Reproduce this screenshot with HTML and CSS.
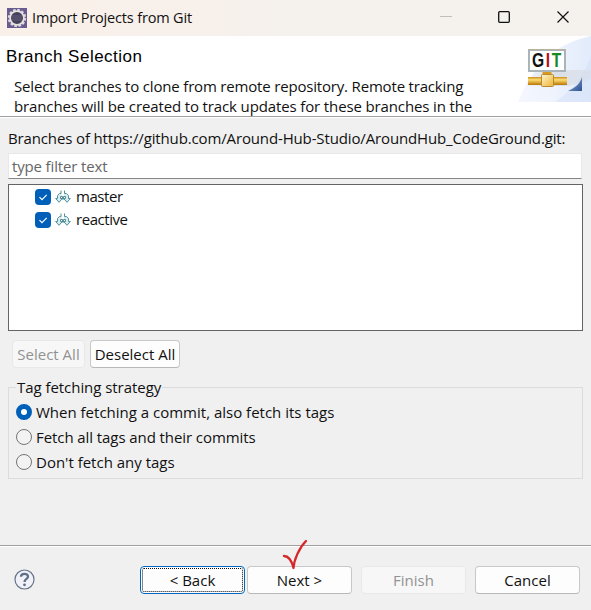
FILE: index.html
```html
<!DOCTYPE html>
<html lang="en">
<head>
<meta charset="utf-8">
<title>Import Projects from Git</title>
<link rel="stylesheet" href="styles.css">
</head>
<body>
<div class="dialog">
  <header class="titlebar">
    <svg class="app-icon" width="20" height="20" viewBox="0 0 20 20">
      <rect width="20" height="20" fill="#675b91"/>
      <circle cx="10" cy="10" r="8.200" fill="none" stroke="#dedbd9" stroke-width="2" stroke-dasharray="2.6 1.7"/>
      <circle cx="10" cy="10" r="6.900" fill="#45405b" stroke="#e6e2df" stroke-width="1.800"/>
      <path d="M5 8h10M4.500 10h11M5 12h10" stroke="#655e7c"/>
    </svg>
    <span class="title">Import Projects from Git</span>
    <svg class="window-controls" width="151" height="36" viewBox="0 0 151 36" fill="none">
      <path d="M0 16.500h12" stroke="#c2beba"/>
      <rect x="58.700" y="11.700" width="10.600" height="10.600" rx="1" stroke="#111" stroke-width="1.300"/>
      <path d="M117.500 11.500l11 11M128.500 11.500l-11 11" stroke="#111" stroke-width="1.200"/>
    </svg>
  </header>

  <section class="banner">
    <div class="banner-text">
      <h1>Branch Selection</h1>
      <p><span class="desc-a">Select branches to clone from remote repository. Remote tracking</span><br><span class="desc-b">branches will be created to track updates for these branches in the</span></p>
    </div>
    <svg class="banner-art" width="76" height="66" viewBox="0 0 76 66">
      <defs>
        <linearGradient id="sky" x1="0" y1="0" x2="1" y2="0">
          <stop offset="0" stop-color="#f4f7fe"/><stop offset=".5" stop-color="#eef3fd"/><stop offset="1" stop-color="#e2ebfb"/>
        </linearGradient>
        <linearGradient id="pipe" x1="0" y1="0" x2="0" y2="1">
          <stop offset="0" stop-color="#c98e1c"/><stop offset=".35" stop-color="#ffdc73"/><stop offset="1" stop-color="#b97705"/>
        </linearGradient>
        <linearGradient id="joint" x1="0" y1="0" x2="1" y2="1">
          <stop offset="0" stop-color="#fff5ca"/><stop offset="1" stop-color="#efb334"/>
        </linearGradient>
        <linearGradient id="shade" x1="0" y1="0" x2="1" y2="0">
          <stop offset="0" stop-color="#d5d9e0" stop-opacity="0"/><stop offset=".5" stop-color="#d5d9e0" stop-opacity=".8"/><stop offset="1" stop-color="#d5d9e0" stop-opacity=".4"/>
        </linearGradient>
        <linearGradient id="corner" x1="0" y1="0" x2="1" y2="1">
          <stop offset="0" stop-color="#8faedb"/><stop offset="1" stop-color="#2e538f"/>
        </linearGradient>
      </defs>
      <path d="M3 66C18 30 38 8 76 0V66Z" fill="url(#sky)"/>
      <path d="M40 66C55 56 68 42 76 20V66Z" fill="#d3e0f7" opacity=".5"/>
      <path d="M8 50L22 34H76V43L54 50H8Z" fill="url(#shade)"/>
      <rect x="14" y="14" width="36" height="21" fill="#fff" stroke="#a9b5b8" stroke-width="2"/>
      <path d="M13 13.500H51" stroke="#b9b39b"/>
      <text class="git-letters" transform="translate(17 31) scale(.8 1)"><tspan fill="#111">G</tspan><tspan fill="#b5121b">I</tspan><tspan fill="#168a20">T</tspan></text>
      <rect x="27.500" y="36" width="9" height="4" fill="#d99b1f"/>
      <rect x="13" y="41" width="39" height="8" fill="url(#pipe)"/>
      <rect x="26.500" y="38.500" width="12" height="12" rx="1" fill="url(#joint)" stroke="#b98932"/>
      <path d="M67 41V55H53C60 52 65 48 67 41Z" fill="url(#corner)"/>
    </svg>
  </section>

  <main class="content">
    <div class="branch-label">Branches of https://github.com/Around-Hub-Studio/AroundHub_CodeGround.git:</div>
    <div class="filter">type filter text</div>
    <div class="tree">
      <div class="tree-row">
        <span class="checkbox"><svg width="16" height="16" viewBox="0 0 16 16"><path d="M4.500 8.200l2.500 2.500 4.700-4.900" fill="none" stroke="#fff" stroke-width="1.200"/></svg></span>
        <svg class="branch-icon" width="16" height="14" viewBox="0 0 16 14"><path id="branch-shape" d="M6 .5V3.500H4.500L2.500 5.500V8.500H.7L4 12.300L7.300 8.500H5.500V6.500H7.500V9.500M8.500 9.500V6.500H10.500V8.500H8.700L12 12.300L15.300 8.500H13.500V5.500L11.500 3.500H9.500V.5" fill="#d5eeee" stroke="#548e9b"/></svg>
        <span class="branch-name">master</span>
      </div>
      <div class="tree-row">
        <span class="checkbox"><svg width="16" height="16" viewBox="0 0 16 16"><path d="M4.500 8.200l2.500 2.500 4.700-4.900" fill="none" stroke="#fff" stroke-width="1.200"/></svg></span>
        <svg class="branch-icon" width="16" height="14" viewBox="0 0 16 14"><use href="#branch-shape"/></svg>
        <span class="branch-name">reactive</span>
      </div>
    </div>
    <div class="selection-actions">
      <button class="button select-all" disabled>Select All</button>
      <button class="button deselect-all">Deselect All</button>
    </div>
    <fieldset class="tags">
      <legend>Tag fetching strategy</legend>
      <div class="option"><span class="radio selected"></span><span>When fetching a commit, also fetch its tags</span></div>
      <div class="option"><span class="radio"></span><span class="opt-b">Fetch all tags and their commits</span></div>
      <div class="option"><span class="radio"></span><span>Don't fetch any tags</span></div>
    </fieldset>
  </main>

  <footer class="footer">
    <svg class="help" width="21" height="21" viewBox="0 0 21 21"><circle cx="10.500" cy="10.500" r="9.500" fill="#f0f2f7" stroke="#67748a" stroke-width="1.200"/><path d="M7 7.800C7 3.800 14 4 14 7.500C14 10 10.500 9.700 10.500 13" fill="none" stroke="#607089" stroke-width="2.300"/><circle cx="10.500" cy="15.800" r="1.400" fill="#607089"/></svg>
    <button class="button back">&lt; Back</button>
    <button class="button next">Next &gt;</button>
    <button class="button finish" disabled>Finish</button>
    <button class="button cancel">Cancel</button>
    <svg class="tick" width="28" height="34" viewBox="0 0 28 34"><path d="M3 18C8 18 11 24 12.500 30C13 22 18 10 25 3" fill="none" stroke="#d6282b" stroke-width="2.300" stroke-linecap="round" stroke-linejoin="round"/></svg>
  </footer>
</div>
</body>
</html>
```

FILE: styles.css
```css
* { box-sizing: border-box; }
body { margin: 0; background: #f0f0f0; color: #111; font: 15px/20px "Open Sans", "Noto Sans", sans-serif; white-space: nowrap; }
.dialog { width: 591px; height: 610px; display: flex; flex-direction: column; overflow: hidden; }
.titlebar { height: 36px; flex: none; display: flex; align-items: center; padding: 0 0 2px 7px; background: linear-gradient(90deg, #f9f0e9, #f8f0eb 35%, #f5f1ed 45%, #f5f1ed); }
.title { margin: 2px 0 0 5px; font-size: 14.5px; letter-spacing: -.17px; }
.app-icon { margin-top: 1px; }
.window-controls { margin: 2px 0 0 auto; }
.banner { height: 82px; flex: none; display: flex; justify-content: space-between; background: #fff; border-bottom: 1px solid #fff; box-shadow: inset 0 -1px #a0a0a0; overflow: hidden; }
.banner-text { padding-left: 6px; }
h1 { margin: 11px 0 0; font: 17px/20px "Liberation Sans", sans-serif; letter-spacing: .5px; color: #000; }
.banner p { margin: 9px 0 0 8px; }
.desc-a { letter-spacing: -.18px; }
.desc-b { letter-spacing: -.13px; }
.content { height: 427px; flex: none; padding: 10px 8px 0; }
.branch-label { letter-spacing: -.135px; }
.filter { height: 26px; width: 574px; margin-top: 5px; padding: 2px 3px; background: #fff; border: 1px solid #e8e8e8; border-bottom-color: #858585; color: #666; letter-spacing: -.15px; }
.tree { width: 575px; height: 147px; margin-top: 5px; padding: 0 26px; background: #fff; border: 1px solid #646464; }
.tree-row { height: 23px; display: flex; align-items: center; }
.checkbox { width: 16px; height: 16px; border-radius: 4px; background: #005fb8; }
.checkbox svg { display: block; }
.branch-icon { margin-left: 4px; }
.branch-name { margin: 0 0 2px 5px; letter-spacing: -.45px; }
.selection-actions { display: flex; gap: 5px; padding: 9px 0 0 4px; }
.button { height: 28px; padding: 0; border: 1px solid #c8c8c8; border-bottom-color: #b8b8b8; border-radius: 4px; background: #fdfdfd; color: #111; font: inherit; }
.button:disabled { color: #929292; background: #f7f7f7; border-color: #e8e8e8; }
.select-all { width: 73px; }
.deselect-all { width: 90px; }
.tags { width: 575px; height: 102px; margin: 9px 0 0; padding: 2px 7px; border: 1px solid #dcdcdc; }
legend { padding: 0 1px; margin-left: 0; letter-spacing: -.05px; }
.option { display: flex; align-items: center; height: 25px; gap: 4px; }
.opt-b { letter-spacing: -.08px; }
.radio { width: 16px; height: 16px; border: 1px solid #747474; border-radius: 50%; background: #f3f3f3; }
.selected { border: 5px solid #005fb8; background: #fff; }
.footer { position: relative; flex: 1; display: flex; align-items: center; padding: 4px 11px 0 14px; border-top: 1px solid #a0a0a0; box-shadow: inset 0 1px #fff; }
.footer .button { width: 105px; }
.help { margin-top: -2px; }
.footer .back { margin-left: 105px; border: 1px solid #0067c0; outline: 1px dotted #111; outline-offset: -3px; }
.footer .next { margin-left: 2px; }
.footer .finish { margin-left: 9px; }
.footer .cancel { margin-left: 9px; }
.tick { position: absolute; left: 281px; top: -8px; }
.git-letters { font: bold 19.5px "Liberation Sans", sans-serif; letter-spacing: 2px; }
```
